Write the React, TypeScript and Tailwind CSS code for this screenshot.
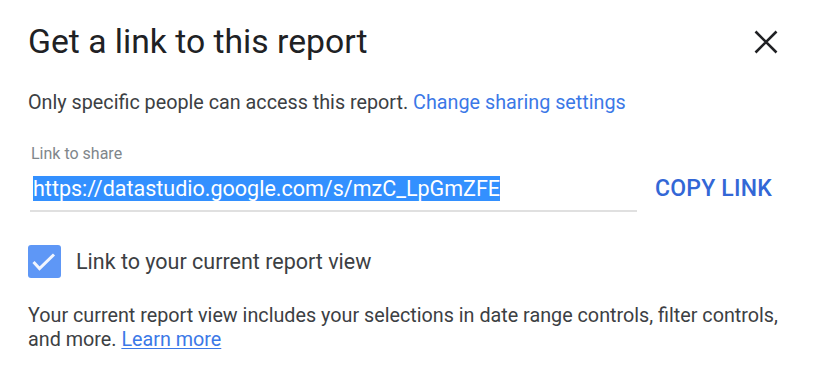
export default function App() {
  return (
    <div className="w-[814px] h-[384px] bg-white font-['Roboto',sans-serif] text-[#202124] overflow-hidden">
      <div className="pl-[28px] pr-[36px] pt-[22px]">
        <div className="flex items-center justify-between">
          <h1 className="text-[33.7px] leading-[40px] font-normal">Get a link to this report</h1>
          <button className="w-[24px] h-[24px] flex items-center justify-center" aria-label="Close">
            <svg width="24" height="24" viewBox="0 0 24 24" fill="none">
              <path d="M1.5 1.5L22.5 22.5M22.5 1.5L1.5 22.5" stroke="#202124" strokeWidth="2.6" />
            </svg>
          </button>
        </div>

        <p className="mt-[29px] text-[19.75px] leading-[24px] text-[#3c4043]">
          Only specific people can access this report.{" "}
          <a href="#" className="text-[#3b78e7]">Change sharing settings</a>
        </p>

        <div className="mt-[30px] flex items-end">
          <div className="w-[607px] ml-[2px] border-b-2 border-[#e0e0e0] pb-[9px]">
            <div className="text-[16px] leading-[18px] text-[#80868b] pl-[1px]">Link to share</div>
            <div className="mt-[13px] pl-[3px] text-[21.5px] leading-[25px]">
              <span className="bg-[#3390ff] text-white">https://datastudio.google.com/s/mzC_LpGmZFE</span>
            </div>
          </div>
          <button className="ml-[18px] mb-[10px] text-[23px] leading-[27px] font-medium text-[#3367d6] tracking-[0.2px]">COPY LINK</button>
        </div>

        <label className="mt-[33px] flex items-center gap-[15px]">
          <span className="w-[33px] h-[33px] rounded-[3px] bg-[#5e97f6] flex items-center justify-center shrink-0">
            <svg width="33" height="33" viewBox="0 0 33 33" fill="none">
              <path d="M5.5 17L11.5 23.5L26 9.5" stroke="#f1f5fe" strokeWidth="3" />
            </svg>
          </span>
          <span className="text-[21.5px] leading-[26px] text-[#3c4043]">Link to your current report view</span>
        </label>

        <p className="mt-[26px] text-[19.75px] leading-[24px] text-[#3c4043] w-[760px]">
          Your current report view includes your selections in date range controls, filter controls, and more.{" "}
          <a href="#" className="text-[#3b78e7] underline underline-offset-2">Learn more</a>
        </p>
      </div>
    </div>
  );
}
